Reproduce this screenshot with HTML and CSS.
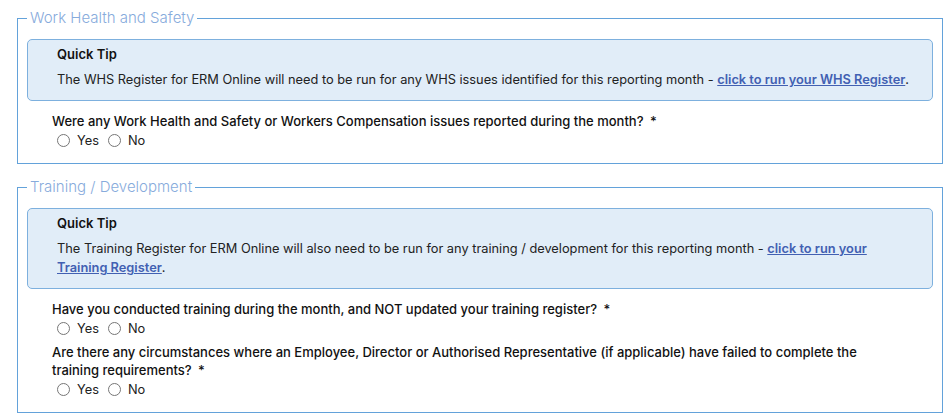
FILE: index.html
```html
<!DOCTYPE html>
<html lang="en">
<head>
<meta charset="utf-8">
<title>ERM Online</title>
<link rel="stylesheet" href="styles.css">
</head>
<body>
<div class="page">
  <fieldset class="section">
    <legend class="section-title">Work Health and Safety</legend>
    <div class="tip">
      <div class="tip-title">Quick Tip</div>
      <p class="tip-text">The WHS Register for ERM Online will need to be run for any WHS issues identified for this reporting month - <a href="#" class="tip-link">click to run your WHS Register</a>.</p>
    </div>
    <div class="question">
      <div class="q-label">Were any Work Health and Safety or Workers Compensation issues reported during the month? <span class="req">*</span></div>
      <div class="options">
        <label class="opt"><input type="radio" name="whs"> Yes</label>
        <label class="opt"><input type="radio" name="whs"> No</label>
      </div>
    </div>
  </fieldset>

  <fieldset class="section section-second">
    <legend class="section-title">Training / Development</legend>
    <div class="tip">
      <div class="tip-title">Quick Tip</div>
      <p class="tip-text">The Training Register for ERM Online will also need to be run for any training / development for this reporting month - <a href="#" class="tip-link">click to run your Training Register</a>.</p>
    </div>
    <div class="question">
      <div class="q-label">Have you conducted training during the month, and NOT updated your training register? <span class="req">*</span></div>
      <div class="options">
        <label class="opt"><input type="radio" name="tr1"> Yes</label>
        <label class="opt"><input type="radio" name="tr1"> No</label>
      </div>
    </div>
    <div class="question question-next">
      <div class="q-label">Are there any circumstances where an Employee, Director or Authorised Representative (if applicable) have failed to complete the training requirements? <span class="req">*</span></div>
      <div class="options">
        <label class="opt"><input type="radio" name="tr2"> Yes</label>
        <label class="opt"><input type="radio" name="tr2"> No</label>
      </div>
    </div>
  </fieldset>
</div>
</body>
</html>
```

FILE: styles.css
```css
html, body {
  margin: 0;
  padding: 0;
  background: #ffffff;
}

body {
  font-family: Inter, "Open Sans", "Liberation Sans", sans-serif;
  color: #1e1e1e;
  font-size: 12.8px;
}

.page {
  padding: 8px 9px 0 17px;
}

.section {
  margin: 0;
  border: 1px solid #63a2da;
  padding: 11px 9px 13px 9px;
  min-width: 0;
}

.section-second {
  margin-top: 13px;
}

.section-title {
  padding: 0 3px;
  font-size: 15px;
  line-height: 20px;
  font-weight: 300;
  color: #87abdc;
}

.tip {
  background: #e1edf8;
  border: 1px solid #7db0de;
  border-radius: 5px;
  padding: 4px 18px 11px 29px;
}

.tip-title {
  font-weight: 600;
  font-size: 13px;
  line-height: 20px;
  color: #111;
}

.tip-text {
  margin: 6px 0 0 0;
  line-height: 19px;
  color: #222;
}

.tip-link {
  color: #4260b2;
  font-weight: 600;
  text-decoration: underline;
}

.question {
  margin-top: 11px;
  padding: 0 30px 0 25px;
}

.question-next {
  margin-top: 5px;
}

.q-label {
  font-size: 13px;
  font-weight: 500;
  line-height: 18px;
  color: #111;
}

.req {
  margin-left: 3px;
}

.options {
  display: flex;
  align-items: center;
  gap: 4px;
  height: 20px;
}

.opt {
  display: inline-flex;
  align-items: center;
  color: #222;
}

.opt input {
  margin: 0 7px 0 5px;
  width: 13px;
  height: 13px;
}
```
